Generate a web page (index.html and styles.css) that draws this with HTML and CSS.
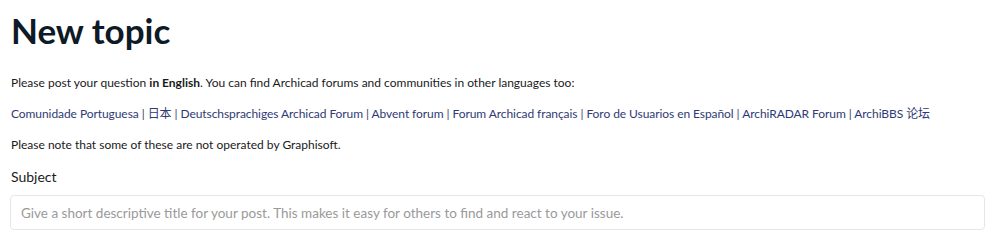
FILE: index.html
```html
<!DOCTYPE html>
<html lang="en">
<head>
    <meta charset="UTF-8">
    <meta name="viewport" content="width=device-width, initial-scale=1.0">
    <title>New topic</title>
    <link rel="stylesheet" href="styles.css">
</head>
<body>
    <div class="page">
        <h1 class="title">New topic</h1>
        <div class="intro">
            <p>Please post your question <strong>in English</strong>. You can find Archicad forums and communities in other languages too:</p>
            <p class="links">
                <a href="#">Comunidade Portuguesa</a> | <a href="#">日本</a> | <a href="#">Deutschsprachiges Archicad Forum</a> | <a href="#">Abvent forum</a> | <a href="#">Forum Archicad français</a> | <a href="#">Foro de Usuarios en Español</a> | <a href="#">ArchiRADAR Forum</a> | <a href="#">ArchiBBS 论坛</a>
            </p>
            <p>Please note that some of these are not operated by Graphisoft.</p>
        </div>
        <label class="field-label" for="subject">Subject</label>
        <input class="field" type="text" id="subject" placeholder="Give a short descriptive title for your post. This makes it easy for others to find and react to your issue.">
    </div>
</body>
</html>
```

FILE: styles.css
```css
body {
    font-family: Lato, "Noto Sans CJK SC", sans-serif;
    color: #1a1a1a;
    background-color: #fff;
    margin: 0;
    padding: 0;
}
.page {
    width: 975px;
    padding: 0 10px;
}
.title {
    font-size: 35px;
    font-weight: 700;
    color: #0e1a26;
    margin: 0;
    padding: 7px 0 0 1px;
    line-height: 46px;
}
.intro {
    padding: 21px 0 0 1px;
    font-size: 12px;
}
.intro p {
    margin: 0 0 13px 0;
    line-height: 18px;
}
.intro strong {
    font-weight: 700;
}
.links {
    color: #3b4368;
    letter-spacing: -0.07px;
}
.links a {
    color: #2f3a75;
    text-decoration: none;
}
.field-label {
    display: block;
    font-size: 14px;
    color: #1a1a1a;
    padding: 0 0 0 1px;
    line-height: 20px;
}
.field {
    display: block;
    box-sizing: border-box;
    width: 975px;
    height: 35px;
    margin-top: 8px;
    padding: 0 10px;
    border: 1px solid #e6e6e6;
    border-radius: 4px;
    font-family: Lato, sans-serif;
    font-size: 13.5px;
    color: #333;
    outline: none;
}
.field::placeholder {
    color: #9a9a9a;
}
```
